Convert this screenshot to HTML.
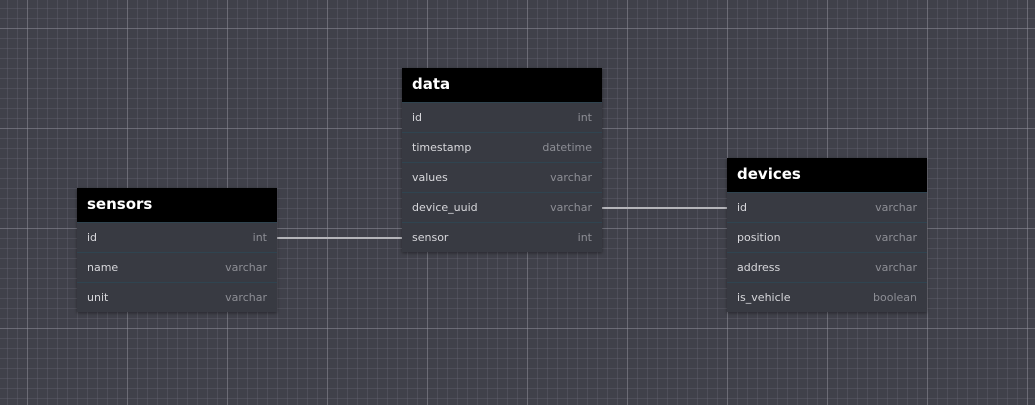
<!DOCTYPE html>
<html><head><style>
html,body{margin:0;padding:0}
body{width:1035px;height:405px;overflow:hidden;position:relative;font-family:"DejaVu Sans","Liberation Sans",sans-serif;
background-color:#40414a;
background-image:
linear-gradient(to right,rgba(160,160,170,.35) 1px,transparent 1px),
linear-gradient(to bottom,rgba(160,160,170,.35) 1px,transparent 1px),
linear-gradient(to right,rgba(110,110,122,.3) 1px,transparent 1px),
linear-gradient(to bottom,rgba(110,110,122,.3) 1px,transparent 1px);
background-size:100px 100px,100px 100px,10px 10px,10px 10px;
background-position:27px 0,0 28px,7px 0,0 8px;}
.t{position:absolute;width:200px;background:#383a42;box-shadow:0 1px 3px rgba(0,0,0,.4)}
.h{height:34px;background:#000;color:#fff;font-weight:bold;font-size:15px;line-height:32px;padding-left:10px}
.r{height:29px;border-top:1px solid #2f4450;display:flex;justify-content:space-between;align-items:center;padding:0 10px;font-size:11px}
.r span:first-child{color:#d8d8dc}
.r span:last-child{color:#8d8e95}
.l{position:absolute;height:2px;background:#b5b5ba}
</style></head><body>
<div class="l" style="left:277px;top:237px;width:125px"></div>
<div class="l" style="left:602px;top:207px;width:125px"></div>
<div class="t" style="left:77px;top:188px">
<div class="h">sensors</div>
<div class="r"><span>id</span><span>int</span></div>
<div class="r"><span>name</span><span>varchar</span></div>
<div class="r"><span>unit</span><span>varchar</span></div>
</div>
<div class="t" style="left:402px;top:68px">
<div class="h">data</div>
<div class="r"><span>id</span><span>int</span></div>
<div class="r"><span>timestamp</span><span>datetime</span></div>
<div class="r"><span>values</span><span>varchar</span></div>
<div class="r"><span>device_uuid</span><span>varchar</span></div>
<div class="r"><span>sensor</span><span>int</span></div>
</div>
<div class="t" style="left:727px;top:158px">
<div class="h">devices</div>
<div class="r"><span>id</span><span>varchar</span></div>
<div class="r"><span>position</span><span>varchar</span></div>
<div class="r"><span>address</span><span>varchar</span></div>
<div class="r"><span>is_vehicle</span><span>boolean</span></div>
</div>
</body></html>
